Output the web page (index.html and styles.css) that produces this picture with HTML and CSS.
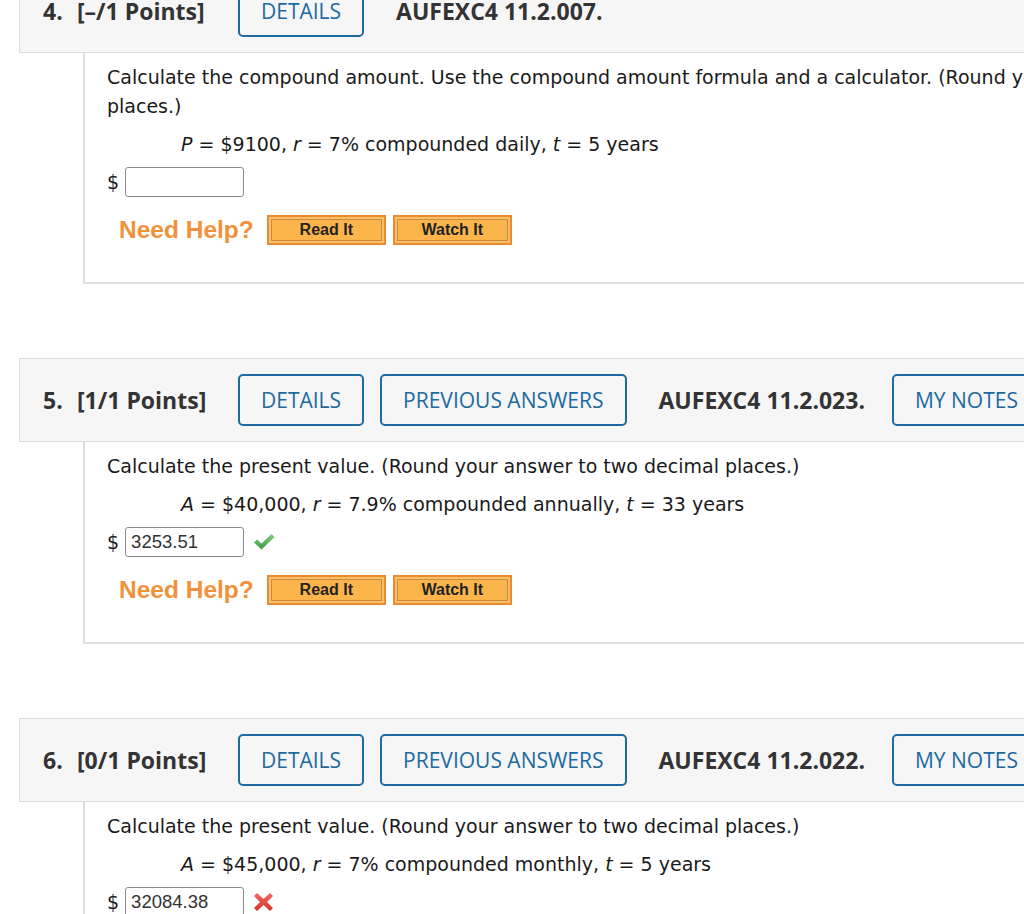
FILE: index.html
```html
<!DOCTYPE html>
<html lang="en">
<head>
<meta charset="utf-8">
<title>Questions</title>
<link rel="stylesheet" href="styles.css">
</head>
<body>
<div class="page">

  <section class="q">
    <div class="qhead">
      <span class="qnum">4.</span>
      <span class="qpts">[–/1 Points]</span>
      <span class="btn">DETAILS</span>
      <span class="qcode">AUFEXC4 11.2.007.</span>
    </div>
    <div class="qbody">
      <p class="qtext">Calculate the compound amount. Use the compound amount formula and a calculator. (Round your answer to two decimal places.)</p>
      <p class="formula"><i>P</i> = $9100, <i>r</i> = 7% compounded daily, <i>t</i> = 5 years</p>
      <div class="answer">
        <span class="dollar">$</span>
        <span class="input"></span>
      </div>
      <div class="help">
        <span class="help-label">Need Help?</span>
        <span class="hbtn"><span class="hbtn-in">Read It</span></span>
        <span class="hbtn"><span class="hbtn-in">Watch It</span></span>
      </div>
    </div>
  </section>

  <section class="q">
    <div class="qhead">
      <span class="qnum">5.</span>
      <span class="qpts">[1/1 Points]</span>
      <span class="btn">DETAILS</span>
      <span class="btn">PREVIOUS ANSWERS</span>
      <span class="qcode">AUFEXC4 11.2.023.</span>
      <span class="btn">MY NOTES</span>
    </div>
    <div class="qbody">
      <p class="qtext">Calculate the present value. (Round your answer to two decimal places.)</p>
      <p class="formula"><i>A</i> = $40,000, <i>r</i> = 7.9% compounded annually, <i>t</i> = 33 years</p>
      <div class="answer">
        <span class="dollar">$</span>
        <span class="input">3253.51</span>
        <svg class="mark" width="22" height="18" viewBox="0 0 22 18" aria-label="correct">
          <defs>
            <linearGradient id="gchk" x1="0" y1="0" x2="0" y2="1">
              <stop offset="0" stop-color="#7fca7f"/>
              <stop offset="1" stop-color="#3f9a45"/>
            </linearGradient>
          </defs>
          <polygon points="1,9.5 4,6.5 8.5,10.5 18.5,1 21.5,4 8.5,16.5" fill="url(#gchk)"/>
        </svg>
      </div>
      <div class="help">
        <span class="help-label">Need Help?</span>
        <span class="hbtn"><span class="hbtn-in">Read It</span></span>
        <span class="hbtn"><span class="hbtn-in">Watch It</span></span>
      </div>
    </div>
  </section>

  <section class="q">
    <div class="qhead">
      <span class="qnum">6.</span>
      <span class="qpts">[0/1 Points]</span>
      <span class="btn">DETAILS</span>
      <span class="btn">PREVIOUS ANSWERS</span>
      <span class="qcode">AUFEXC4 11.2.022.</span>
      <span class="btn">MY NOTES</span>
    </div>
    <div class="qbody">
      <p class="qtext">Calculate the present value. (Round your answer to two decimal places.)</p>
      <p class="formula"><i>A</i> = $45,000, <i>r</i> = 7% compounded monthly, <i>t</i> = 5 years</p>
      <div class="answer">
        <span class="dollar">$</span>
        <span class="input">32084.38</span>
        <svg class="mark" width="21" height="20" viewBox="0 0 21 20" aria-label="incorrect">
          <defs>
            <linearGradient id="gx" x1="0" y1="0" x2="0" y2="1">
              <stop offset="0" stop-color="#f06a60"/>
              <stop offset="1" stop-color="#d8322c"/>
            </linearGradient>
          </defs>
          <polygon points="1,4 4,1 10.5,7 17,1 20,4 14,10 20,16 17,19 10.5,13 4,19 1,16 7,10" fill="url(#gx)"/>
        </svg>
      </div>
      <div class="help">
        <span class="help-label">Need Help?</span>
        <span class="hbtn"><span class="hbtn-in">Read It</span></span>
        <span class="hbtn"><span class="hbtn-in">Watch It</span></span>
      </div>
    </div>
  </section>

</div>
</body>
</html>
```

FILE: styles.css
```css
html, body {
  margin: 0;
  padding: 0;
  background: #ffffff;
  overflow: hidden;
}

.page {
  width: 1600px;
  margin-top: -31px;
  margin-left: 19px;
}

.q {
  margin-bottom: 74px;
}

.qhead {
  display: flex;
  align-items: center;
  height: 52px;
  padding: 15px 23px;
  background: #f6f6f6;
  border: 1px solid #dcdcdc;
  font-family: "Open Sans", "Liberation Sans", sans-serif;
  font-size: 23px;
  color: #333333;
}

.qnum {
  font-weight: 700;
  width: 34px;
}

.qpts {
  font-weight: 700;
  width: 161px;
}

.qcode {
  font-weight: 700;
  margin-left: 16px;
  margin-right: 27px;
}

.btn {
  box-sizing: border-box;
  height: 52px;
  display: inline-flex;
  align-items: center;
  justify-content: center;
  padding: 0 21px;
  border: 2px solid #1c6a9f;
  border-radius: 5px;
  color: #1c6a9f;
  font-size: 21px;
  font-weight: 500;
  margin-right: 16px;
  white-space: nowrap;
}

.qbody {
  margin-left: 64px;
  padding: 10px 22px 37px;
  border-left: 2px solid #dddddd;
  border-bottom: 2px solid #dddddd;
  font-family: "DejaVu Sans", Verdana, sans-serif;
  font-size: 19px;
  color: #1a1a1a;
}

.qtext {
  margin: 0;
  line-height: 29px;
  width: 1200px;
}

.formula {
  margin: 9px 0 0 74px;
  line-height: 29px;
}

.answer {
  margin-top: 8px;
  height: 30px;
  display: flex;
  align-items: center;
}

.dollar {
  margin-right: 6px;
}

.input {
  box-sizing: border-box;
  width: 119px;
  height: 30px;
  border: 1px solid #8c8c8c;
  border-radius: 3px;
  padding-left: 5px;
  font-family: "Liberation Sans", Arial, sans-serif;
  font-size: 18.5px;
  line-height: 28px;
  color: #333333;
}

.mark {
  margin-left: 9px;
}

.help {
  margin-top: 18px;
  height: 30px;
  display: flex;
  align-items: center;
}

.help-label {
  margin-left: 12px;
  margin-right: 13px;
  font-family: "Liberation Sans", Arial, sans-serif;
  font-weight: 700;
  font-size: 24.5px;
  color: #f3913a;
}

.hbtn {
  box-sizing: border-box;
  width: 119px;
  height: 30px;
  border: 2px solid #ec8a34;
  background: #fcc165;
  padding: 2px;
  margin-right: 7px;
  display: flex;
}

.hbtn-in {
  flex: 1;
  display: flex;
  align-items: center;
  justify-content: center;
  border: 1px solid #c98a43;
  background: #fbb54b;
  font-family: "Liberation Sans", Arial, sans-serif;
  font-weight: 700;
  font-size: 16px;
  color: #222222;
}
```
